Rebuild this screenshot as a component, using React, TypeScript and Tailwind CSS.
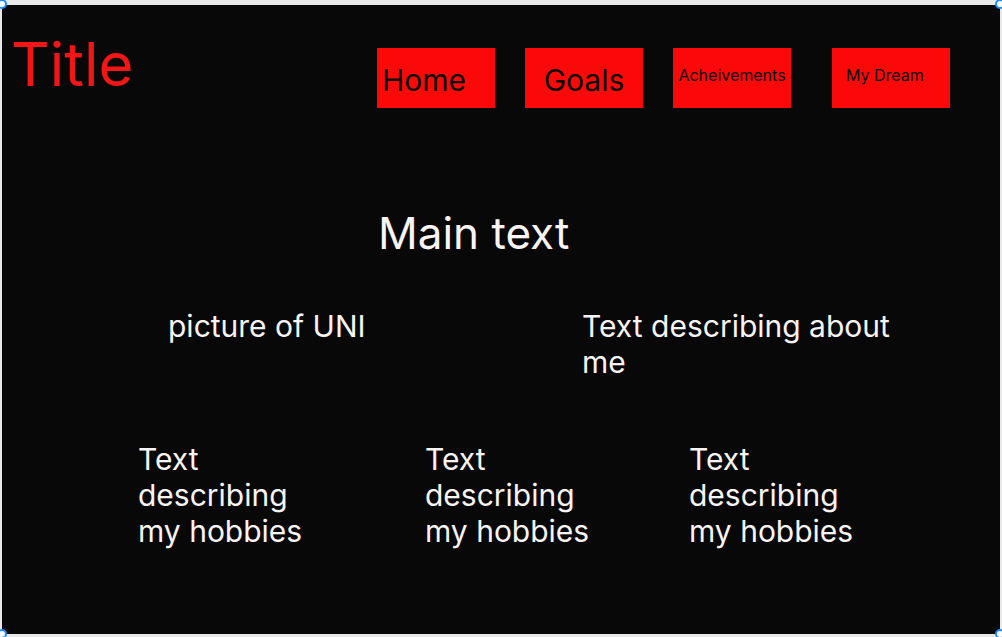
const navItems = [
  { label: 'Home', cls: 'items-center pl-[5px] pt-[3px] text-[30px]', gap: '' },
  { label: 'Goals', cls: 'items-center justify-center pt-[3px] text-[30px]', gap: 'ml-[30px]' },
  { label: 'Acheivements', cls: 'items-start justify-center pt-[19px] text-[16px]', gap: 'ml-[30px]' },
  { label: 'My Dream', cls: 'items-start pl-[14px] pt-[19px] text-[16px]', gap: 'ml-[41px]' },
];

function Handle({ pos }: { pos: string }) {
  return (
    <span
      className={`absolute h-[10px] w-[10px] rounded-full border-2 border-[#1a8cff] bg-white ${pos}`}
    />
  );
}

function Hobby() {
  return (
    <p className="w-[170px] text-[30px] leading-[36px] text-[#f8f4f4]">
      Text describing my hobbies
    </p>
  );
}

export default function App() {
  return (
    <div
      className="relative h-[637px] w-[1002px] overflow-hidden bg-[#e9e9e9] pl-[2px] pt-[5px]"
      style={{ fontFamily: 'Inter, "Noto Sans", sans-serif' }}
    >
      <div className="h-[629px] w-[998px] bg-[#080808]">
        <header className="flex items-start">
          <div className="w-[375px] pl-[9px] pt-[29px]">
            <h1 className="text-[60px] leading-none text-[#f21616]">Title</h1>
          </div>
          <nav className="flex pt-[43px]">
            {navItems.map((item) => (
              <div
                key={item.label}
                className={`flex h-[60px] w-[118px] bg-[#fb0909] leading-none text-[#0a0a0a] ${item.cls} ${item.gap}`}
              >
                {item.label}
              </div>
            ))}
          </nav>
        </header>

        <h2 className="mt-[103px] pl-[376px] text-[44px] leading-none text-[#f8f4f4]">
          Main text
        </h2>

        <section className="mt-[53px] flex">
          <div className="w-[580px] pl-[166px]">
            <p className="text-[30px] leading-[36px] text-[#f8f4f4]">picture of UNI</p>
          </div>
          <p className="w-[320px] text-[30px] leading-[36px] text-[#f8f4f4]">
            Text describing about me
          </p>
        </section>

        <section className="mt-[61px] flex pl-[136px]">
          <div className="w-[287px]">
            <Hobby />
          </div>
          <div className="w-[264px]">
            <Hobby />
          </div>
          <div>
            <Hobby />
          </div>
        </section>
      </div>

      <Handle pos="left-[-3px] top-[-1px]" />
      <Handle pos="right-[-3px] top-[-1px]" />
      <Handle pos="left-[-3px] bottom-[-2px]" />
      <Handle pos="right-[-3px] bottom-[-2px]" />
    </div>
  );
}
